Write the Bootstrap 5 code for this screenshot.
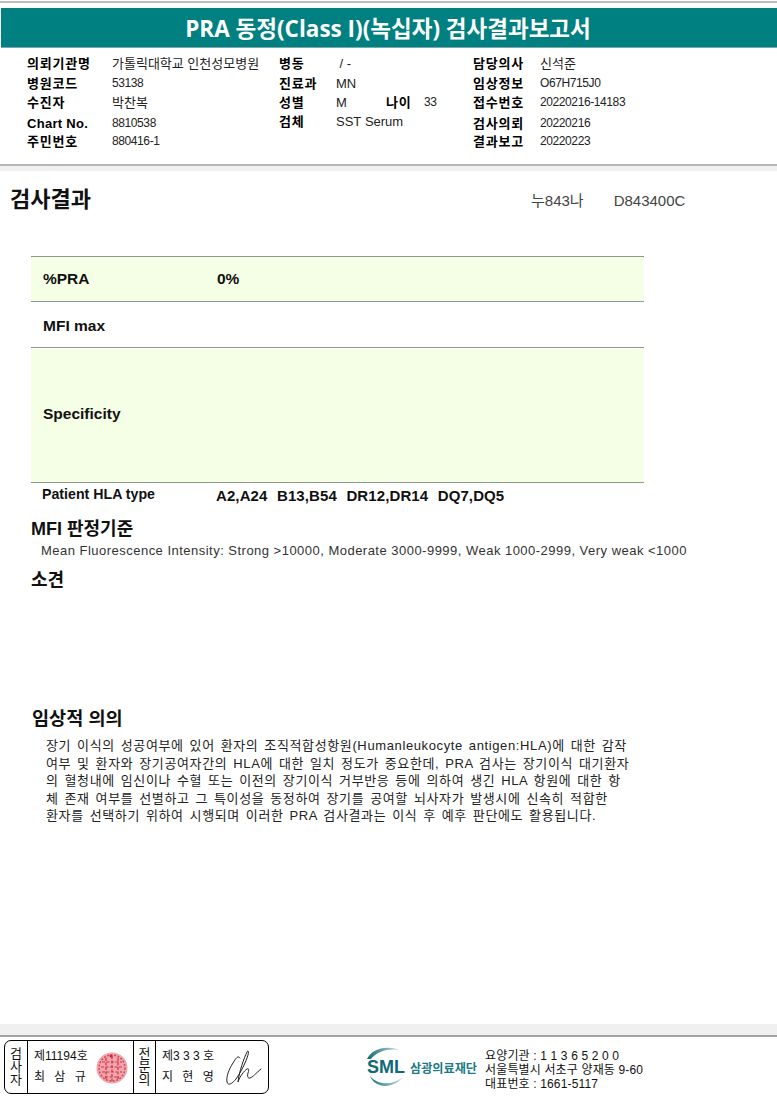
<!DOCTYPE html>
<html lang="ko">
<head>
<meta charset="utf-8">
<title>PRA 동정 검사결과보고서</title>
<link rel="stylesheet" href="https://cdn.jsdelivr.net/npm/bootstrap@5.3.0/dist/css/bootstrap.min.css">
<style>
html,body{margin:0;background:#fff}
body{width:777px;height:1104px;overflow:hidden;font-family:"Liberation Sans","Noto Sans CJK KR",sans-serif;color:#111}
.topline{height:2px;margin-top:1px;background:#bdbdbd}
.titlebar{height:40px;margin:5px 0 0 1px;background:#008080;color:#fff;font:700 22.5px/41px "Open Sans","Noto Sans CJK KR",sans-serif;text-align:center;padding-right:2px;border-bottom:1px solid #7fa9a9}
.info{height:118px;border-bottom:2px solid #b5b5b5;padding:6px 0 0 27px;font-size:13px;color:#222}
.inforow{height:19.5px;line-height:19px;white-space:nowrap}
.inforow.r4{height:18px}
.inforow.r3{height:20.5px}
.inforow b{font-weight:700;color:#000;display:block;font-size:13px;letter-spacing:.8px}
.inforow b.latin{letter-spacing:.3px}
.inforow b.up2{margin-top:-2px}
.c4.up2{margin-top:-2px}
.num{font-size:12px;letter-spacing:-.4px}
.c1{width:85px}.c2{width:167px}.c3{width:57px}.c4{width:50px}.c5{width:38px}.c6{width:49px}.c7{width:67px}
.band{background:#f0f0f0;height:5px}
.band-foot{height:11px}
.reshead{height:85px;padding:15px 0 0 10px}
.reshead h1{font-size:22px;font-weight:700;line-height:28px;margin:0;width:521px}
.reshead span{font-size:15px;color:#444;line-height:30px}
.code2{margin-left:30px}
.restable{margin:0 0 0 31px;width:613px;border-top:1px solid #8f9a8f}
.trow{border-bottom:1px solid #8f9a8f;font-size:15.5px;font-weight:700;color:#111;display:flex;align-items:center;padding-left:12px}
.fill{background:#f5ffe6}
.h1r{height:45px}.h2r{height:46px;padding-top:3px}.h3r{height:134px;margin-top:1px;padding-bottom:4px}
.lbl{width:174px}
.hla{margin-left:31px;padding:3px 0 0 11px;font-size:15px;font-weight:700;height:33px;display:flex;white-space:nowrap;line-height:20px}
.hla .lbl{width:174px;font-size:14.2px;margin-top:-2px}
.hla .hval{letter-spacing:.1px;word-spacing:.5px}
.sect{font-size:18px;font-weight:700;margin:0;line-height:22px;color:#111}
.mfi{margin:2px 0 0 31px}
.mfitext{margin:2px 0 0 41px;font-size:13px;color:#333;line-height:18px;letter-spacing:.48px;white-space:nowrap}
.sogyeon{margin:9px 0 0 31px}
.uisil{margin:117px 0 0 32px;font-size:18.6px}
.para{margin:7px 0 0 46px;width:590px;font-size:13px;line-height:17.5px;color:#222;white-space:nowrap;letter-spacing:.62px;word-spacing:1.7px}
.gapper{height:199px}
.foot{border-top:2px solid #a3a3a3;height:68px;padding:3px 0 0 4px;display:flex;align-items:flex-start}
.sign{width:265px;height:54px;border:1px solid #000;border-radius:7px;display:flex;font-size:12px;color:#111}
.sign>div{border-right:1px solid #000;height:100%}
.sign>div:last-child{border-right:0}
.vert{width:23px;font-size:13px;line-height:13px;text-align:center;display:flex;flex-direction:column;justify-content:center}
.vert.narrow{width:22px}
.person{line-height:21px;padding:5px 0 0 6px;white-space:nowrap;position:relative}
.person .spaced{letter-spacing:3px}
.p1{width:106px}.p2{flex:1}
.seal{position:absolute;left:68px;top:11px}
.sig{position:absolute;left:69px;top:9px}
.logo{margin:6px 0 0 98px;width:118px;height:45px;flex:none;overflow:visible}
.addr{margin:9px 0 0 0;font-size:12px;line-height:14px;color:#111;white-space:nowrap;letter-spacing:.15px}
</style>
</head>
<body>
<div class="topline"></div>
<div class="titlebar">PRA 동정(Class I)(녹십자) 검사결과보고서</div>
<section class="info">
  <div class="inforow d-flex"><b class="c1">의뢰기관명</b><span class="c2">가톨릭대학교 인천성모병원</span><b class="c3">병동</b><span class="c4">&nbsp;/ -</span><span class="c5"></span><span class="c6"></span><b class="c7">담당의사</b><span>신석준</span></div>
  <div class="inforow d-flex"><b class="c1">병원코드</b><span class="c2 num">53138</span><b class="c3">진료과</b><span class="c4">MN</span><span class="c5"></span><span class="c6"></span><b class="c7">임상정보</b><span class="num">O67H715J0</span></div>
  <div class="inforow r3 d-flex"><b class="c1">수진자</b><span class="c2">박찬복</span><b class="c3">성별</b><span class="c4">M</span><b class="c5">나이</b><span class="c6 num">33</span><b class="c7">접수번호</b><span class="num">20220216-14183</span></div>
  <div class="inforow r4 d-flex"><b class="c1 latin">Chart No.</b><span class="c2 num">8810538</span><b class="c3 up2">검체</b><span class="c4 up2">SST&nbsp;Serum</span><span class="c5"></span><span class="c6"></span><b class="c7">검사의뢰</b><span class="num">20220216</span></div>
  <div class="inforow d-flex"><b class="c1">주민번호</b><span class="c2 num">880416-1</span><b class="c3"></b><span class="c4"></span><span class="c5"></span><span class="c6"></span><b class="c7">결과보고</b><span class="num">20220223</span></div>
</section>
<div class="band"></div>
<div class="reshead d-flex"><h1>검사결과</h1><span>누843나</span><span class="code2">D843400C</span></div>
<div class="restable">
  <div class="trow fill h1r"><span class="lbl">%PRA</span><span>0%</span></div>
  <div class="trow h2r"><span class="lbl">MFI max</span></div>
  <div class="trow fill h3r"><span class="lbl">Specificity</span></div>
</div>
<div class="hla"><span class="lbl">Patient HLA type</span><span class="hval">A2,A24&nbsp; B13,B54&nbsp; DR12,DR14&nbsp; DQ7,DQ5</span></div>
<h2 class="sect mfi">MFI 판정기준</h2>
<p class="mfitext mb-0">Mean Fluorescence Intensity: Strong &gt;10000, Moderate 3000-9999, Weak 1000-2999, Very weak &lt;1000</p>
<h2 class="sect sogyeon">소견</h2>
<h2 class="sect uisil">임상적 의의</h2>
<p class="para mb-0">장기 이식의 성공여부에 있어 환자의 조직적합성항원(Humanleukocyte antigen:HLA)에 대한 감작<br>여부 및 환자와 장기공여자간의 HLA에 대한 일치 정도가 중요한데, PRA 검사는 장기이식 대기환자<br>의 혈청내에 임신이나 수혈 또는 이전의 장기이식 거부반응 등에 의하여 생긴 HLA 항원에 대한 항<br>체 존재 여부를 선별하고 그 특이성을 동정하여 장기를 공여할 뇌사자가 발생시에 신속히 적합한<br>환자를 선택하기 위하여 시행되며 이러한 PRA 검사결과는 이식 후 예후 판단에도 활용됩니다.</p>
<div class="gapper"></div>
<div class="band band-foot"></div>
<footer class="foot">
  <div class="sign">
    <div class="vert"><span>검</span><span>사</span><span>자</span></div>
    <div class="person p1">제11194호<br><span class="spaced">최 삼 규</span>
      <svg class="seal" width="32" height="32" viewBox="0 0 32 32" aria-hidden="true"><circle cx="16" cy="16" r="15.5" fill="#f0a6aa"/><circle cx="16" cy="16" r="13" fill="none" stroke="#d9465a" stroke-width="1.5" stroke-dasharray="2 1.5"/><path d="M6 10h20M5 15h22M6 20h20M9 25h14M10 6v21M16 4v25M22 6v21" stroke="#cf3048" stroke-width="1.2" stroke-dasharray="3 1.5" fill="none"/><circle cx="15" cy="4" r="1.5" fill="#c92a42"/></svg>
    </div>
    <div class="vert narrow"><span>전</span><span>문</span><span>의</span></div>
    <div class="person p2">제3 3 3 호<br><span class="spaced">지 현 영</span>
      <svg class="sig" width="38" height="38" viewBox="0 0 38 38" aria-hidden="true"><path d="M15 8C13 5 11 8 8 13C4 19 1 27 2 32c1 4 5 2 9-3 5-7 10-17 12-24 1-4 0-5-1-3-3 6-8 20-9 30 2-6 6-11 9-13 2-1 2 1 1 4-1 3 0 6 2 5 3-1 5-4 11-9" fill="none" stroke="#222" stroke-width="1" stroke-linecap="round"/></svg>
    </div>
  </div>
  <svg class="logo" viewBox="0 0 118 45" aria-label="SML 삼광의료재단">
    <defs><linearGradient id="g" x1="0" x2="1"><stop offset="0" stop-color="#0f6a75"/><stop offset="1" stop-color="#cfe3e4"/></linearGradient></defs>
    <path d="M0 13C5 3 18-1 33 4C22 2 10 5 4 13Z" fill="url(#g)"/>
    <path d="M3 30C9 38 24 41 36 31C28 42 9 44 3 30Z" fill="url(#g)"/>
    <text x="0" y="27" font-family="'Liberation Sans',sans-serif" font-size="19" font-weight="700" fill="#0f6a78" textLength="38" lengthAdjust="spacingAndGlyphs">SML</text>
    <text x="43" y="27" font-family="'Noto Sans CJK KR',sans-serif" font-size="12" font-weight="700" fill="#1b7a85" textLength="67" lengthAdjust="spacingAndGlyphs">삼광의료재단</text>
  </svg>
  <div class="addr">요양기관 : 1 1 3 6 5 2 0 0<br>서울특별시 서초구 양재동 9-60<br>대표번호 : 1661-5117</div>
</footer>
</body>
</html>
